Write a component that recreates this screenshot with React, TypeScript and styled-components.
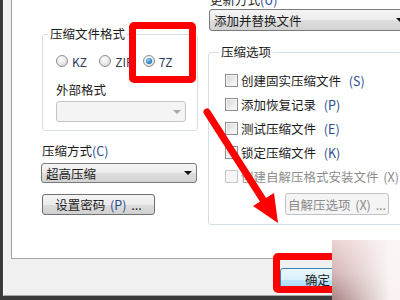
import React from "react";
import styled, { createGlobalStyle } from "styled-components";

const GlobalStyle = createGlobalStyle`
  html, body {
    margin: 0;
    padding: 0;
    width: 400px;
    height: 300px;
    overflow: hidden;
    background: #f0f0f0;
  }
  body {
    font-family: "Noto Sans CJK SC", "Noto Sans", sans-serif;
    font-size: 12.5px;
    word-spacing: 2px;
    color: #1b1b1b;
  }
`;

const App: React.FC = () => {
  return (
    <Screen>
      <GlobalStyle />
      <Frame>
        <Window>
          <TabPanel>
            <Columns>
              <LeftColumn>
                <GroupBox>
                  <GroupTitle $offset={-8}>压缩文件格式</GroupTitle>
                  <RadioRow>
                    <RadioItem>
                      <Radio />
                      KZ
                    </RadioItem>
                    <RadioItem>
                      <Radio />
                      ZIP
                    </RadioItem>
                    <RadioItem>
                      <Radio $checked />
                      7Z
                    </RadioItem>
                  </RadioRow>
                  <FieldLabel $top={11}>外部格式</FieldLabel>
                  <Combo $disabled $width={130} $height={21} $top={4} />
                </GroupBox>
                <FieldLabel $top={13}>
                  压缩方式<Key>(C)</Key>
                </FieldLabel>
                <Combo $width={156} $height={20} $top={5} $shift={-1}>
                  超高压缩
                </Combo>
                <PushButton $width={113} $top={11}>
                  设置密码 <Key>(P)</Key> ...
                </PushButton>
              </LeftColumn>

              <RightColumn>
                <TopLabel>
                  更新方式<Key>(U)</Key>
                </TopLabel>
                <Combo $width={200} $height={22} $top={3} $shift={1}>
                  添加并替换文件
                </Combo>
                <OptionsBox>
                  <GroupTitle $offset={-6}>压缩选项</GroupTitle>
                  <CheckRow>
                    <CheckBox />
                    创建固实压缩文件 <Key>(S)</Key>
                  </CheckRow>
                  <CheckRow>
                    <CheckBox />
                    添加恢复记录 <Key>(P)</Key>
                  </CheckRow>
                  <CheckRow>
                    <CheckBox />
                    测试压缩文件 <Key>(E)</Key>
                  </CheckRow>
                  <CheckRow>
                    <CheckBox />
                    锁定压缩文件 <Key>(K)</Key>
                  </CheckRow>
                  <CheckRow $disabled>
                    <CheckBox $disabled />
                    创建自解压格式安装文件 (X)
                  </CheckRow>
                  <ButtonLine>
                    <PushButton $width={104} $top={5} $height={22} $disabled>
                      自解压选项 (X) ...
                    </PushButton>
                  </ButtonLine>
                </OptionsBox>
              </RightColumn>
            </Columns>
          </TabPanel>
          <Footer>
            <DefaultButton>确定</DefaultButton>
          </Footer>
        </Window>
      </Frame>

      <RedBox style={{ left: 129, top: 22, width: 67, height: 61 }} />
      <RedBox style={{ left: 273, top: 253, width: 90, height: 40 }} />
      <Arrow viewBox="0 0 400 300" width="400" height="300">
        <line
          x1="207"
          y1="112"
          x2="267"
          y2="206"
          stroke="#ff0000"
          strokeWidth="7"
          strokeLinecap="round"
        />
        <polygon points="278,223 253,206 274,193" fill="#ff0000" />
      </Arrow>
      <Watermark />
    </Screen>
  );
};

const Screen = styled.div`
  position: relative;
  width: 400px;
  height: 300px;
  overflow: hidden;
`;

const Frame = styled.div`
  display: flex;
  height: 300px;
  border-left: 3px solid #3a3a3a;
  border-bottom: 4px solid #3a3a3a;
  box-sizing: border-box;
`;

const Window = styled.div`
  flex: 1;
  display: flex;
  flex-direction: column;
  min-width: 0;
  background: #f0f0f0;
  border-left: 1px solid #fafafa;
  border-bottom: 1px solid #a6a6a6;
  padding-left: 7px;
`;

const TabPanel = styled.div`
  height: 259px;
  box-sizing: border-box;
  background: #ffffff;
  border-left: 1px solid #a0a0a0;
  border-bottom: 1px solid #a8a8a8;
  overflow: hidden;
`;

const Columns = styled.div`
  display: flex;
  gap: 10px;
  padding-left: 30px;
`;

const LeftColumn = styled.div`
  display: flex;
  flex-direction: column;
  width: 156px;
  flex-shrink: 0;
`;

const RightColumn = styled.div`
  display: flex;
  flex-direction: column;
  width: 194px;
  flex-shrink: 0;
`;

const GroupBox = styled.fieldset`
  margin: 27px 0 0;
  padding: 9px 11px 8px 13px;
  border: 1px solid #d5dfe5;
  border-radius: 3px;
  min-width: 0;
`;

const OptionsBox = styled(GroupBox)`
  margin-top: 14px;
  padding: 9px 12px 9px 16px;
`;

const GroupTitle = styled.legend<{ $offset: number }>`
  padding: 0 2px;
  margin-left: ${({ $offset }) => $offset}px;
  line-height: 14px;
  background: #fff;
`;

const RadioRow = styled.div`
  display: flex;
  height: 22px;
  align-items: center;
`;

const RadioItem = styled.label`
  display: flex;
  align-items: center;
  gap: 4px;
  width: 45px;
  white-space: nowrap;
  color: #2b3a55;
  font-size: 12px;
`;

const Radio = styled.span<{ $checked?: boolean }>`
  width: 10px;
  height: 10px;
  flex-shrink: 0;
  border-radius: 50%;
  border: 1px solid #8c8f94;
  background: radial-gradient(circle at 40% 35%, #ffffff 0%, #e6e6e6 55%, #c9cbcf 100%);
  display: flex;
  align-items: center;
  justify-content: center;

  &::after {
    content: "";
    display: ${({ $checked }) => ($checked ? "block" : "none")};
    width: 6px;
    height: 6px;
    border-radius: 50%;
    background: radial-gradient(circle at 40% 35%, #8fd6ff 0%, #2b86c9 55%, #10508a 100%);
  }
`;

const FieldLabel = styled.div<{ $top: number }>`
  margin-top: ${({ $top }) => $top}px;
  line-height: 14px;
  white-space: nowrap;
`;

const TopLabel = styled.div`
  margin-top: -7px;
  padding-left: 2px;
  line-height: 13px;
  white-space: nowrap;
`;

const Key = styled.span`
  color: #2a4d8f;
`;

const Combo = styled.div<{
  $width: number;
  $height: number;
  $top: number;
  $shift?: number;
  $disabled?: boolean;
}>`
  position: relative;
  box-sizing: border-box;
  width: ${({ $width }) => $width}px;
  height: ${({ $height }) => $height}px;
  margin-top: ${({ $top }) => $top}px;
  margin-left: ${({ $shift }) => $shift ?? 0}px;
  padding-left: 4px;
  display: flex;
  align-items: center;
  white-space: nowrap;
  border: 1px solid ${({ $disabled }) => ($disabled ? "#c2c4c7" : "#7a7a7a")};
  border-radius: 3px;
  background: ${({ $disabled }) =>
    $disabled
      ? "#f4f4f4"
      : "linear-gradient(#f4f4f4 0%, #ececec 50%, #dedede 51%, #d2d2d2 100%)"};

  &::after {
    content: "";
    position: absolute;
    right: 4px;
    top: 50%;
    margin-top: -2px;
    border-left: 4px solid transparent;
    border-right: 4px solid transparent;
    border-top: 4px solid ${({ $disabled }) => ($disabled ? "#a8a8a8" : "#111")};
  }
`;

const PushButton = styled.div<{
  $width: number;
  $top: number;
  $height?: number;
  $disabled?: boolean;
}>`
  box-sizing: border-box;
  width: ${({ $width }) => $width}px;
  height: ${({ $height }) => $height ?? 21}px;
  margin-top: ${({ $top }) => $top}px;
  display: flex;
  align-items: center;
  justify-content: center;
  white-space: pre;
  color: ${({ $disabled }) => ($disabled ? "#8a8a8a" : "inherit")};
  border: 1px solid ${({ $disabled }) => ($disabled ? "#bfc2c5" : "#707070")};
  border-radius: 3px;
  background: ${({ $disabled }) =>
    $disabled
      ? "#f4f4f4"
      : "linear-gradient(#f4f4f4 0%, #ebebeb 50%, #dddddd 51%, #d0d0d0 100%)"};

  ${Key} {
    color: ${({ $disabled }) => ($disabled ? "#8a8a8a" : "#2a4d8f")};
  }
`;

const CheckRow = styled.div<{ $disabled?: boolean }>`
  display: flex;
  align-items: center;
  gap: 3px;
  height: 24px;
  white-space: pre;
  color: ${({ $disabled }) => ($disabled ? "#8d8d8d" : "inherit")};
`;

const CheckBox = styled.span<{ $disabled?: boolean }>`
  box-sizing: border-box;
  width: 13px;
  height: 13px;
  flex-shrink: 0;
  border: 1px solid ${({ $disabled }) => ($disabled ? "#c8c8c8" : "#8e8f8f")};
  background: ${({ $disabled }) =>
    $disabled ? "#f6f6f6" : "linear-gradient(135deg, #d0d3d8 0%, #eeeeee 60%, #fafafa 100%)"};
  box-shadow: inset 0 0 0 1px #f4f4f4;
`;

const ButtonLine = styled.div`
  display: flex;
  justify-content: flex-end;
`;

const Footer = styled.div`
  flex: 1;
  display: flex;
  padding: 9px 0 0 269px;
`;

const DefaultButton = styled.div`
  box-sizing: border-box;
  width: 75px;
  height: 23px;
  flex-shrink: 0;
  display: flex;
  align-items: center;
  justify-content: center;
  border: 1px solid #3c7fb1;
  border-radius: 3px;
  background: linear-gradient(#eaf6fd 0%, #d9f0fc 50%, #bee6fd 51%, #a7d9f5 100%);
`;

const RedBox = styled.div`
  position: absolute;
  box-sizing: border-box;
  border: 7.5px solid #ff0000;
  border-radius: 5px;
  pointer-events: none;
`;

const Arrow = styled.svg`
  position: absolute;
  left: 0;
  top: 0;
  pointer-events: none;
`;

const Watermark = styled.div`
  position: absolute;
  left: 332px;
  top: 240px;
  width: 68px;
  height: 60px;
  background:
    linear-gradient(to right, rgba(255, 255, 255, 0) 0%, rgba(252, 248, 248, 0.95) 85%),
    linear-gradient(#ecd2d2 0%, #d4b4b4 55%, #a88282 100%);
`;

export default App;
